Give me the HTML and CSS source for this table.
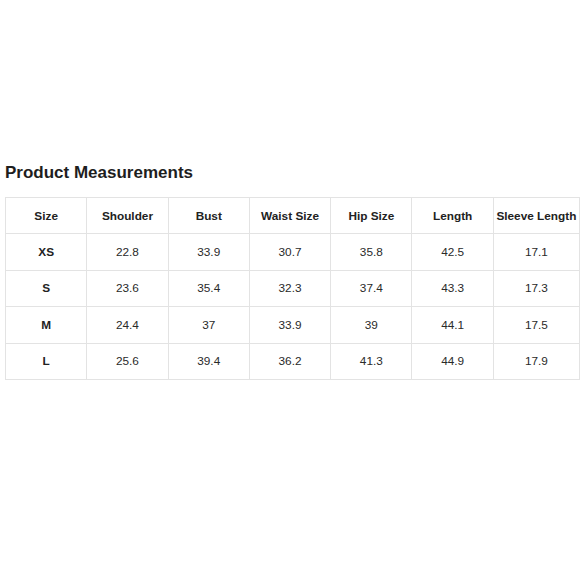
FILE: index.html
```html
<!DOCTYPE html>
<html>
<head>
<meta charset="utf-8">
<link rel="stylesheet" href="styles.css">
</head>
<body>
<div class="page">
  <h2 class="title">Product Measurements</h2>
  <table class="sizes">
    <colgroup>
      <col class="c"><col class="c"><col class="c"><col class="c"><col class="c"><col class="c"><col class="c-last">
    </colgroup>
    <thead>
      <tr><th>Size</th><th>Shoulder</th><th>Bust</th><th>Waist Size</th><th>Hip Size</th><th>Length</th><th>Sleeve Length</th></tr>
    </thead>
    <tbody>
      <tr><th>XS</th><td>22.8</td><td>33.9</td><td>30.7</td><td>35.8</td><td>42.5</td><td>17.1</td></tr>
      <tr><th>S</th><td>23.6</td><td>35.4</td><td>32.3</td><td>37.4</td><td>43.3</td><td>17.3</td></tr>
      <tr><th>M</th><td>24.4</td><td>37</td><td>33.9</td><td>39</td><td>44.1</td><td>17.5</td></tr>
      <tr><th>L</th><td>25.6</td><td>39.4</td><td>36.2</td><td>41.3</td><td>44.9</td><td>17.9</td></tr>
    </tbody>
  </table>
</div>
</body>
</html>
```
FILE: styles.css
```css
html, body {
  margin: 0;
  padding: 0;
  background: #ffffff;
}
.page {
  padding: 163px 0 0 5px;
  font-family: "Liberation Sans", Arial, sans-serif;
  color: #222222;
}
.title {
  margin: 0 0 14px 0;
  font-size: 17px;
  line-height: 20px;
  font-weight: bold;
  color: #1e1e1e;
}
.sizes {
  border-collapse: collapse;
  table-layout: fixed;
  width: 574px;
}
.sizes .c { width: 81.3px; }
.sizes .c-last { width: 86.2px; }
.sizes th, .sizes td {
  border: 1px solid #e3e3e3;
  height: 36.4px;
  padding: 0;
  text-align: center;
  vertical-align: middle;
  font-size: 11.8px;
  color: #222222;
  box-sizing: border-box;
}
.sizes th { font-weight: bold; }
.sizes td { font-weight: normal; color: #2a2a2a; }
```
